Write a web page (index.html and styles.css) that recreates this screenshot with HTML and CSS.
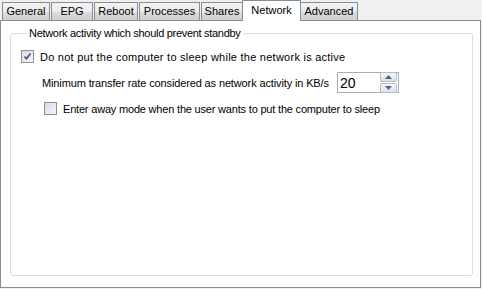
FILE: index.html
```html
<!DOCTYPE html>
<html lang="en">
<head>
    <meta charset="UTF-8">
    <title>Network</title>
    <link rel="stylesheet" href="styles.css">
</head>
<body>
    <div id="tabs">
        <div class="tab tab-general">General</div>
        <div class="tab tab-epg">EPG</div>
        <div class="tab tab-reboot">Reboot</div>
        <div class="tab tab-processes">Processes</div>
        <div class="tab tab-shares">Shares</div>
        <div class="tab tab-network active">Network</div>
        <div class="tab tab-advanced">Advanced</div>
    </div>
    <div id="panel">
        <fieldset class="group">
            <legend>Network activity which should prevent standby</legend>
            <div class="row row-first">
                <span class="check checked">
                    <svg width="9" height="9" viewBox="0 0 9 9"><path d="M1.5 4.5 L3.5 6.8 L7.5 1.5" fill="none" stroke="#3c4f86" stroke-width="1.6"/></svg>
                </span>
                <span class="label-sleep">Do not put the computer to sleep while the network is active</span>
            </div>
            <div class="row row-rate">
                <span class="label-rate">Minimum transfer rate considered as network activity in KB/s</span>
                <div class="spin">
                    <span class="spin-value">20</span>
                    <div class="spin-buttons">
                        <div class="spin-btn"><svg width="7" height="4" viewBox="0 0 7 4"><path d="M0 4 L3.5 0 L7 4 Z" fill="#4d6185"/></svg></div>
                        <div class="spin-btn"><svg width="7" height="4" viewBox="0 0 7 4"><path d="M0 0 L3.5 4 L7 0 Z" fill="#4d6185"/></svg></div>
                    </div>
                </div>
            </div>
            <div class="row row-away">
                <span class="check"></span>
                <span class="label-away">Enter away mode when the user wants to put the computer to sleep</span>
            </div>
        </fieldset>
    </div>
</body>
</html>
```
FILE: styles.css
```css
body {
    margin: 0;
    background-color: #f0f0f0;
    font-family: "Liberation Sans", Arial, sans-serif;
    font-size: 11px;
    color: #000;
}
#tabs {
    display: flex;
    align-items: flex-end;
    height: 20px;
    padding-left: 2px;
    position: relative;
    z-index: 1;
}
.tab {
    box-sizing: border-box;
    height: 18px;
    line-height: 17px;
    margin-right: 1px;
    text-align: center;
    border: 1px solid #898c95;
    border-bottom: none;
    background: linear-gradient(#f3f3f3, #ebebeb 50%, #dddddd 51%, #cfcfcf);
}
.tab-general { width: 48px; }
.tab-epg { width: 42px; }
.tab-reboot { width: 44px; }
.tab-processes { width: 61px; }
.tab-shares { width: 42px; }
.tab-network { width: 55px; }
.tab-advanced { width: 58px; }
.tab.active {
    width: 59px;
    height: 21px;
    line-height: 19px;
    margin: 0 -1px -1px -2px;
    background: #fff;
    position: relative;
}
#panel {
    width: 479px;
    height: 266px;
    border: 1px solid #898c95;
    background: #fff;
    display: flex;
}
.group {
    flex: 1;
    margin: 6px 7px 11px 9px;
    padding: 0 0 0 10px;
    border: 1px solid #d5dfe5;
    border-radius: 3px;
}
.group legend {
    padding: 0 2px;
    margin-left: 6px;
    line-height: 13px;
    letter-spacing: -0.3px;
}
.row {
    display: flex;
    align-items: center;
}
.row-first {
    margin-top: 10px;
    gap: 6px;
}
.label-sleep {
    letter-spacing: 0.25px;
}
.row-rate {
    margin-top: 9px;
    padding-left: 21px;
    gap: 8px;
}
.label-rate {
    letter-spacing: -0.13px;
}
.row-away {
    margin-top: 9px;
    padding-left: 23px;
    gap: 6px;
}
.label-away {
    letter-spacing: -0.19px;
}
.check {
    width: 11px;
    height: 11px;
    border: 1px solid #8e8f8f;
    background: linear-gradient(135deg, #dcdcdc, #f6f6f6);
    display: flex;
    align-items: center;
    justify-content: center;
}
.spin {
    width: 60px;
    height: 19px;
    border: 1px solid #abadb3;
    display: flex;
    align-items: center;
    justify-content: space-between;
}
.spin-value {
    font-size: 14px;
    padding-left: 2px;
}
.spin-buttons {
    display: flex;
    flex-direction: column;
    gap: 1px;
    margin-right: 1px;
}
.spin-btn {
    width: 15px;
    height: 8px;
    border: 1px solid #b8bcc4;
    border-radius: 2px;
    background: linear-gradient(#f4f6f8, #dde3eb);
    display: flex;
    align-items: center;
    justify-content: center;
}
```
